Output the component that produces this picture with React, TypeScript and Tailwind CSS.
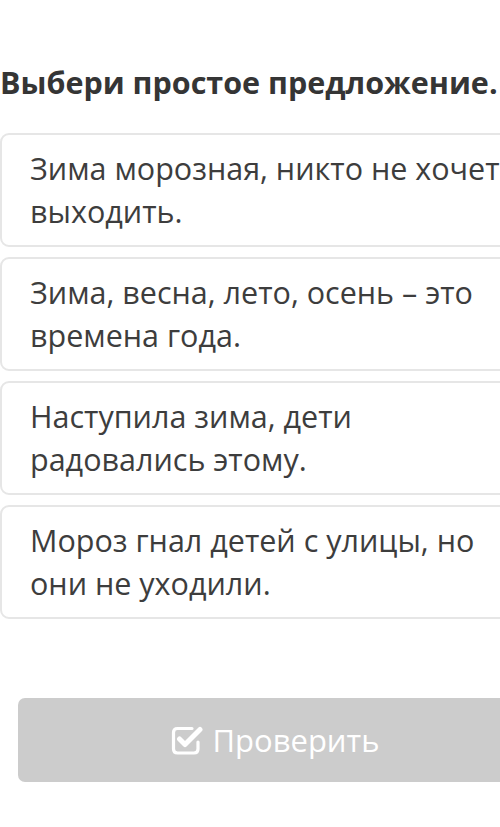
const options = [
  ["Зима морозная, никто не хочет", "выходить."],
  ["Зима, весна, лето, осень – это", "времена года."],
  ["Наступила зима, дети", "радовались этому."],
  ["Мороз гнал детей с улицы, но", "они не уходили."],
];

function CheckSquareIcon() {
  return (
    <svg width="32" height="30" viewBox="0 0 32 30" fill="none" className="shrink-0">
      <path
        d="M21 3.5 H6.5 Q2.5 3.5 2.5 7.5 V24 Q2.5 28 6.5 28 H23 Q27 28 27 24 V17"
        stroke="white"
        strokeWidth="3.2"
        strokeLinecap="round"
      />
      <path
        d="M8.5 14 L14 19.5 L29 4.5"
        stroke="white"
        strokeWidth="5"
        strokeLinecap="round"
        strokeLinejoin="round"
      />
    </svg>
  );
}

export default function App() {
  return (
    <div className="w-[500px] h-[827px] overflow-hidden bg-white font-['Open_Sans',sans-serif]">
      <div className="w-[540px] pt-[65px]">
        {/* TITLE */}
        <h1 className="text-[30.5px] leading-[34px] font-bold text-[#353535] whitespace-nowrap">
          Выбери простое предложение.
        </h1>

        {/* OPTIONS */}
        <div className="mt-[34px] flex flex-col gap-[10px]">
          {options.map((lines) => (
            <div
              key={lines[0]}
              className="h-[114px] rounded-[9px] border-2 border-[#e6e6e6] bg-white pl-[28px] pt-[12px] text-[30.5px] leading-[43px] text-[#3d3d3d] whitespace-nowrap"
            >
              <p>{lines[0]}</p>
              <p>{lines[1]}</p>
            </div>
          ))}
        </div>

        {/* CHECK BUTTON */}
        <div className="mt-[79px] ml-[18px] mr-[8px] h-[84px] rounded-[7px] bg-[#cccccc] flex items-center justify-center gap-[10px] text-white">
          <CheckSquareIcon />
          <span className="text-[31px] leading-none">Проверить</span>
        </div>
      </div>
    </div>
  );
}
